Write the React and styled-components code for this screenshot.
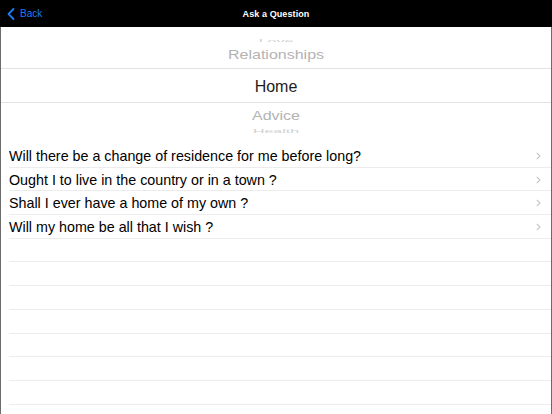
import React from 'react';
import styled, { createGlobalStyle } from 'styled-components';

const GlobalStyle = createGlobalStyle`
  html, body {
    margin: 0;
    padding: 0;
    background: #fff;
    font-family: "Liberation Sans", Arial, sans-serif;
  }
  #root {
    width: 552px;
    height: 414px;
    overflow: hidden;
  }
`;

const Screen = styled.div`
  width: 552px;
  height: 414px;
  display: flex;
  flex-direction: column;
  overflow: hidden;
`;

const NavBar = styled.div`
  height: 27px;
  flex-shrink: 0;
  background: #000;
  display: grid;
  grid-template-columns: 1fr auto 1fr;
  align-items: center;
`;

const BackButton = styled.button`
  background: transparent;
  border: none;
  padding: 0 0 0 7px;
  display: flex;
  align-items: center;
  gap: 5px;
  color: #1a7cf5;
  font-family: inherit;
  font-size: 10px;
  cursor: pointer;
  justify-self: start;
`;

const Title = styled.h1`
  margin: 0;
  color: #fff;
  font-size: 9px;
  font-weight: 700;
  letter-spacing: 0.1px;
`;

const Body = styled.div`
  flex: 1;
  display: flex;
  flex-direction: column;
  border-left: 1px solid #6b6b6b;
  border-right: 1px solid #6b6b6b;
  overflow: hidden;
`;

const Wheel = styled.div`
  height: 117px;
  flex-shrink: 0;
  display: flex;
  flex-direction: column;
  overflow: hidden;
`;

const WheelItem = styled.div`
  height: ${p => p.$h}px;
  flex-shrink: 0;
  display: flex;
  align-items: center;
  justify-content: center;
  padding-top: ${p => (p.$selected ? 2 : 0)}px;
  font-size: 16px;
  color: ${p => (p.$selected ? '#1c1c1c' : '#b3b3b3')};
  border-top: ${p => (p.$selected ? '1px solid #e2e2e2' : 'none')};
  border-bottom: ${p => (p.$selected ? '1px solid #e2e2e2' : 'none')};
  box-sizing: border-box;
  overflow: hidden;

  span {
    display: inline-block;
    transform: scaleY(${p => p.$scale});
    transform-origin: ${p => p.$origin || 'center'};
    opacity: ${p => p.$fade || 1};
  }
`;

const List = styled.div`
  display: flex;
  flex-direction: column;
`;

const Row = styled.div`
  height: 23.7px;
  flex-shrink: 0;
  margin-left: 8px;
  padding-right: 10px;
  padding-top: 1px;
  display: flex;
  align-items: center;
  justify-content: space-between;
  border-bottom: 1px solid #ececec;
  box-sizing: border-box;
  font-size: 14.3px;
  color: #000;
`;

const Chevron = () => (
  <svg width="5" height="8" viewBox="0 0 5 8">
    <path d="M0.8 0.8 L4 4 L0.8 7.2" fill="none" stroke="#c4c4c8" strokeWidth="1.1" />
  </svg>
);

const wheel = [
  { label: 'Love', h: 15, scale: 0.35, origin: 'bottom', fade: 0.6 },
  { label: 'Relationships', h: 26, scale: 0.82 },
  { label: 'Home', h: 35, scale: 1, selected: true },
  { label: 'Advice', h: 26, scale: 0.82 },
  { label: 'Health', h: 15, scale: 0.35, origin: 'top', fade: 0.6 },
];

const questions = [
  'Will there be a change of residence for me before long?',
  'Ought I to live in the country or in a town ?',
  'Shall I ever have a home of my own ?',
  'Will my home be all that I wish ?',
];

const App = () => (
  <Screen>
    <GlobalStyle />
    <NavBar>
      <BackButton>
        <svg width="8" height="12" viewBox="0 0 8 12">
          <path d="M6.5 1 L1.5 6 L6.5 11" fill="none" stroke="#1a7cf5" strokeWidth="1.8" strokeLinecap="round" strokeLinejoin="round" />
        </svg>
        Back
      </BackButton>
      <Title>Ask a Question</Title>
      <div />
    </NavBar>
    <Body>
      <Wheel>
        {wheel.map(w => (
          <WheelItem key={w.label} $h={w.h} $scale={w.scale} $origin={w.origin} $fade={w.fade} $selected={w.selected}>
            <span>{w.label}</span>
          </WheelItem>
        ))}
      </Wheel>
      <List>
        {questions.map(q => (
          <Row key={q}>
            <span>{q}</span>
            <Chevron />
          </Row>
        ))}
        {Array.from({ length: 8 }).map((_, i) => (
          <Row key={i} />
        ))}
      </List>
    </Body>
  </Screen>
);

export default App;
